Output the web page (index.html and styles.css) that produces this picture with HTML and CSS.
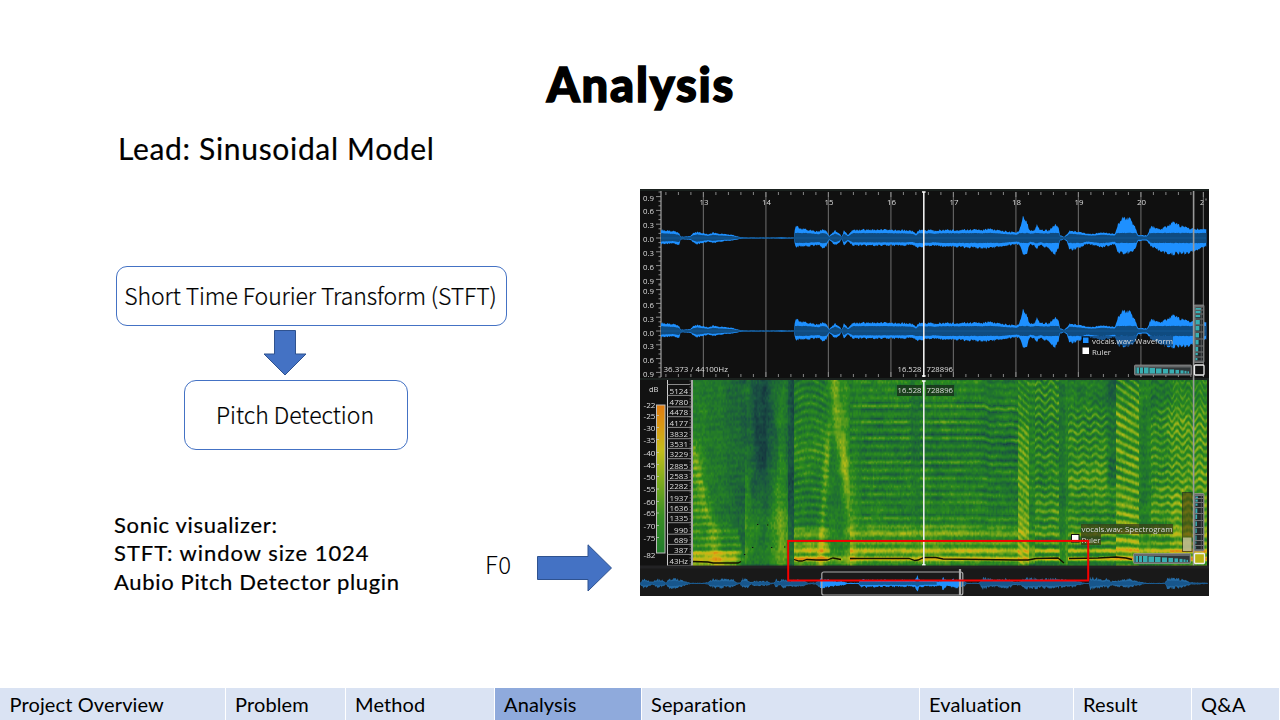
FILE: index.html
```html
<!DOCTYPE html>
<html lang="en">
<head>
<meta charset="utf-8">
<title>Analysis</title>
<link rel="stylesheet" href="styles.css">
</head>
<body>
<main class="slide">
  <h1 class="title"><span>Analysis</span></h1>
  <div class="content">
    <section class="left">
      <h2 class="subtitle">Lead: Sinusoidal Model</h2>
      <div class="flow">
        <div class="step step-wide"><span class="stft">Short Time Fourier Transform (STFT)</span></div>
        <svg class="arrow-down" width="44" height="46" viewBox="0 0 44 46"><path d="M11.500 .5H32.500V24H43L22 45L1 24H11.500Z"/></svg>
        <div class="step step-small"><span class="pitch">Pitch Detection</span></div>
      </div>
      <div class="bottom">
        <div class="notes">
          <p class="n1">Sonic visualizer:</p>
          <p class="n2">STFT: window size 1024</p>
          <p class="n3">Aubio Pitch Detector plugin</p>
        </div>
        <span class="f0">F0</span>
        <svg class="arrow-right" width="76" height="48" viewBox="0 0 76 48"><path d="M.5 12.500H51V.8L74.500 24L51 47V35.500H.5Z"/></svg>
      </div>
    </section>
    <figure class="viewer">
      <canvas id="spectrogram" class="spectrogram" width="514" height="186"></canvas>
      <svg id="overlay" class="overlay" width="569" height="407" viewBox="640 189 569 407"></svg>
    </figure>
  </div>
  <nav class="tabs">
    <span>Project Overview</span><span>Problem</span><span>Method</span><span class="active">Analysis</span><span>Separation</span><span>Evaluation</span><span>Result</span><span>Q&amp;A</span>
  </nav>
</main>
<script src="script.js"></script>
</body>
</html>
```
FILE: styles.css
```css
* { box-sizing: border-box; }
body { margin: 0; background: #fff; color: #000; font-family: Lato, "Open Sans", sans-serif; }
.slide { width: 1280px; height: 720px; display: flex; flex-direction: column; overflow: hidden; }
.title { margin: 0; height: 130px; padding-top: 56px; text-align: center; font-size: 47px; line-height: 56px; font-weight: 900; letter-spacing: 1.8px; text-indent: 2px; -webkit-text-stroke: 1.5px #000; }
.content { flex: 1; display: grid; grid-template-columns: 640px 569px; }
.left { padding-left: 114px; display: flex; flex-direction: column; }
.subtitle { margin: -1px 0 0 4px; height: 137px; font-size: 30px; line-height: 38px; font-weight: 400; letter-spacing: .68px; -webkit-text-stroke: .2px #000; }
.flow { display: flex; flex-direction: column; margin-left: 2px; width: 391px; }
.step { border: 1px solid #4472c4; border-radius: 11px; display: flex; align-items: center; justify-content: center; font: 300 23px "Noto Sans CJK SC", "Open Sans", sans-serif; white-space: nowrap; padding-bottom: 3px; -webkit-text-stroke: .2px #000; }
.stft { letter-spacing: -.1px; margin-right: 2px; }
.step-wide { width: 391px; height: 60px; }
.step-small { width: 224px; height: 70px; margin-left: 68px; border-radius: 12px; padding-right: 2px; }
.arrow-down { margin: 4px 0 4px 147px; }
.arrow-down, .arrow-right { fill: #4472c4; stroke: #2f528f; stroke-width: 1; }
.bottom { display: flex; margin-top: 61px; }
.notes { width: 371px; font-size: 22px; line-height: 28.500px; white-space: nowrap; -webkit-text-stroke: .2px #000; }
.notes p { margin: 0; position: relative; top: -.5px; }
.n1 { letter-spacing: .67px; }
.n2 { letter-spacing: .95px; }
.n3 { letter-spacing: .67px; }
.f0 { width: 52px; padding-top: 35px; font: 300 24px/36px "Noto Sans CJK SC", sans-serif; letter-spacing: .4px; }
.arrow-right { margin-top: 33px; }
.viewer { position: relative; margin: 59px 0 0; width: 569px; height: 407px; background: #171918; overflow: hidden; }
.spectrogram { position: absolute; left: 53px; top: 191px; }
.overlay { position: absolute; left: 0; top: 0; font: 8px "Open Sans", "Noto Sans", sans-serif; }
.tabs { display: grid; grid-template-columns: 226px 120px 149px 147px 278px 154px 118px 88px; height: 32px; }
.tabs span { background: #dae3f3; border-right: 1px solid #fff; padding-left: 9px; font-size: 20px; line-height: 33px; letter-spacing: .13px; white-space: nowrap; }
.tabs span:first-child { padding-left: 9.500px; }
.tabs .active { background: #8faadc; }
```
FILE: script.js
```js
const out = [];
const add = s => out.push(s);
const rect = (x, y, w, h, fill, extra = '') => add(`<rect x="${x}" y="${y}" width="${w}" height="${h}" fill="${fill}" ${extra}/>`);
const line = (x1, y1, x2, y2, c = '#aaa', w = 1) => add(`<line x1="${x1}" y1="${y1}" x2="${x2}" y2="${y2}" stroke="${c}" stroke-width="${w}"/>`);
const label = (x, y, s, w, anchor = 'start') => add(`<text x="${x}" y="${y}" fill="#ddd" text-anchor="${anchor}" ${w ? `textLength="${w}" lengthAdjust="spacingAndGlyphs"` : ''}>${s}</text>`);

function hash(a, b) { const s = Math.sin(a * 127.1 + b * 311.7) * 43758.5453; return s - Math.floor(s); }
function noise(x, y) {
  const i = Math.floor(x), j = Math.floor(y);
  let u = x - i, v = y - j;
  u = u * u * (3 - 2 * u); v = v * v * (3 - 2 * v);
  return (hash(i, j) * (1 - u) + hash(i + 1, j) * u) * (1 - v) + (hash(i, j + 1) * (1 - u) + hash(i + 1, j + 1) * u) * v;
}
const bell = (d, w) => Math.exp(-d * d / (w * w));
const step = (a, b, x) => { const t = Math.max(0, Math.min(1, (x - a) / (b - a))); return t * t * (3 - 2 * t); };
function interp(points, x, k = 1) {
  for (let i = 1; i < points.length; i++) if (x <= points[i][0]) {
    const a = points[i - 1], b = points[i];
    return a[k] + (b[k] - a[k]) * Math.max(0, x - a[0]) / (b[0] - a[0]);
  }
  return points[points.length - 1][k];
}

/* Waveforms: x, upper and lower amplitude */
const wave = [[661,8,6],[673,7,5],[679.5,5,7],[680.5,1.3,1.3],[690,1.7,1.7],[693,4.5,4],[697,6,6.5],[708,3.5,3.5],[713,5.5,5],[720,4.2,3.5],[733,3,2.5],[740,1,1],[744,.4,.4],[777,.4,.4],[781,1,1],[787,.4,.4],[794,.4,.4],[794.4,7,5],[796,12.5,9.5],[799,9.5,8.5],[807,8.5,8],[819,6.2,6.7],[822.5,9.2,9.5],[826.5,7,8.5],[829,2,2],[835,7.5,7],[840,4,4],[841.6,1,1],[844,7.5,7],[848,3,3],[853,8.2,7.3],[880,8.2,7.3],[907,7.7,7.3],[913,7,6.5],[916,4,8.5],[919,8.4,9.4],[924,7.5,8],[930,8,8],[934,7,7],[940,8,8],[983,8,10],[988,9,10.5],[1000,7.3,8.2],[1017,5.5,6],[1019.5,8.5,7],[1023.5,23,18],[1027,15,15],[1030,7,6],[1035,8,8],[1037,14,10],[1040,8,7],[1049,7.5,10],[1055,13,17],[1058.5,11,10],[1060,3,3],[1064,1,1],[1067,4,4],[1069.5,7.5,12],[1078,6,10],[1087,4.5,6],[1093,4,7],[1103,5.5,9],[1115,4,6],[1117.5,13,13],[1123,20,16],[1130,18.5,14],[1135,11,12],[1138,3,3],[1147,2.5,2.5],[1151,12,8],[1160,8.5,13],[1170,13,16],[1173,15.5,16],[1180,12,15],[1187,10,15],[1193,9,13],[1200,9,10],[1206.5,8,8]];
function envelope(pts, cy, color, scale = 1, cap = 99, jag = .25) {
  const top = [], bot = [], x0 = pts[0][0], x1 = pts[pts.length - 1][0];
  for (let x = x0; x <= x1; x += .7) {
    const j = 1 - jag / 2 + jag * hash(Math.floor(x * 1.4), 3), k = 1 - jag / 2 + jag * hash(Math.floor(x * 1.4), 5);
    top.push(`${x.toFixed(1)} ${(cy - Math.min(interp(pts, x, 1) * scale, cap) * j).toFixed(2)}`);
    bot.unshift(`${x.toFixed(1)} ${(cy + Math.min(interp(pts, x, 2) * scale, cap) * k).toFixed(2)}`);
  }
  add(`<path fill="${color}" d="M${top.join('L')}L${bot.join('L')}Z"/>`);
}
rect(640, 189, 569, 190, '#101010');
rect(640, 189, 569, 2, '#1a211e');
rect(640, 378, 569, 2, '#1a211e');
line(661, 191, 661, 377, '#bbb');
for (let i = 0; i < 9; i++) line(703.4 + i * 62.5, 192, 703.4 + i * 62.5, 377, '#606060', 1.2);
for (let i = -3; i < 41; i++) {
  const x = 703.4 + i * 12.5, h = i % 5 ? 3 : 5;
  line(x, 192, x, 192 + h, '#888'); line(x, 377 - h, x, 377, '#888');
}
['13','14','15','16','17','18','19','20'].forEach((t, i) => label(704 + i * 62.5, 204.500, t, 9, 'middle'));
label(1200, 204.500, '2', 4);
line(1206, 198.500, 1206, 200.500, '#999');
[238, 331].forEach(cy => {
  envelope(wave, cy, '#1e90ff');
  envelope(wave, cy, '#0f4b80', .6, 5, .1);
  line(661, cy, 1206, cy, '#17629d', .6);
  for (let j = -10; j <= 10; j++) line(j % 3 ? 658.500 : 656, cy + j * 4.600, 661, cy + j * 4.600, '#aaa', .8);
});
['0.9','0.6','0.3','0.0','0.3','0.6','0.9'].forEach((t, i) => {
  label(643, 200.500 + i * 13.9, t, 11);
  label(643, 293.8 + i * 13.900, t, 11);
});
label(663.5, 372, '36.373 / 44100Hz', 64.500);

/* Spectrogram axes */
rect(640, 380, 53, 186, '#121212');
label(649, 392, 'dB', 9.500);
add('<defs><linearGradient id="level" x1="0" y1="0" x2="0" y2="1"><stop offset="0" stop-color="#e17c10"/><stop offset=".15" stop-color="#d89a14"/><stop offset=".31" stop-color="#c3bd1b"/><stop offset=".5" stop-color="#83ad1e"/><stop offset=".75" stop-color="#398e24"/><stop offset="1" stop-color="#207b2c"/></linearGradient></defs>');
rect(656.5, 405, 8.500, 148, 'url(#level)', 'stroke="#bbb" stroke-width="1"');
[[22,405],[25,415.5],[30,427.5],[35,439.5],[40,452.5],[45,464.5],[50,476.500],[55,489],[60,501.500],[65,513],[70,525.5],[75,537.500],[82,555]].forEach(([n, y]) => {
  label(643.5, y + 3, '-' + n, 12);
  if (n !== 22 && n !== 82) line(656, y, 659, y, '#ccc', .7);
});
line(667.5, 380, 667.5, 566, '#ccc');
line(667, 384.5, 690, 384.5, '#aaa', .8);
[['5124',390.7],['4780',402.200],['4478',412],['4177',422.700],['3832',434],['3531',443.700],['3229',454],['2885',465.500],['2583',475.700],['2282',486],['1937',497.700],['1636',507.700],['1335',518],['990',529.500],['689',539.700],['387',549.700],['43Hz',561]].forEach(([t, y]) => {
  label(688, y + 3, t, t.length === 3 ? 14 : 18.500, 'end');
  line(667, y + 4.700, 692, y + 4.700, '#aaa', .8);
});
line(692, 380, 692, 566, '#bbb', 1.8);
for (let y = 381; y < 566; y += 3) line(689.500, y, 691.500, y, '#888', .7);

/* Detected pitch contour */
const dark = d => add(`<path d="${d}" fill="none" stroke="#141000" stroke-width="1.3"/>`);
dark('M693 561.500L708 562L713 563H738L741 561.500');
dark('M794 559.500L799 561L802 561L807 559.500L816 560L827 560L833 558L841 559.500');
dark('M850 558.500H909L915 560.500L918 560L924 557.500L936 557.500L943 559L1015 560L1028 560L1036 558.500L1058 558L1064 563');
dark('M1069 558.500L1098 558L1116 557L1126 558L1132 559.500');
[[757,524],[767,524.500],[752,547],[771,547],[784,546.500],[744,554]].forEach(p => rect(p[0], p[1], 1.3, 1, '#111'));

/* Legends, playhead and position labels */
line(1193.600, 191, 1193.600, 566, '#999', 1.6);
rect(1081, 336, 92, 10, '#101010', 'opacity=".45"');
rect(1082.500, 337, 6.500, 6.500, '#1e90ff', 'stroke="#060d16"');
rect(1082.500, 347.500, 6.500, 6.500, '#fff');
label(1092, 344, 'vocals.wav: Waveform', 81);
label(1092, 354.500, 'Ruler', 19);
rect(897, 385, 25, 11, '#172b18', 'opacity=".75"');
rect(926, 385, 28, 11, '#172b18', 'opacity=".75"');
[372, 393].forEach(y => { label(897.500, y, '16.528', 24); label(926.500, y, '728896', 26.500); });
line(923.800, 192, 923.800, 377, '#eee', 1.6);
line(923.800, 381, 923.800, 565, '#eee', 1.6);
[192, 376, 381, 565].forEach(y => line(922, y, 925.600, y, '#fff', 1.5));
rect(1081, 524, 92, 10, '#383c18', 'opacity=".75"');
rect(1081, 534, 20, 11, '#383c18', 'opacity=".75"');
label(1081.500, 532, 'vocals.wav: Spectrogram', 91);
label(1081.500, 542.500, 'Ruler', 19);
rect(1071.500, 534.500, 7.500, 7.500, '#fff', 'stroke="#111"');

/* Zoom wheels */
function horizontalWheel(x, y, w) {
  rect(x, y, w, 10, '#66696a', 'rx="1" stroke="#999" stroke-width=".7"');
  rect(x + 1, y + 2.500, w - 2, 6, '#303638');
  [[1,1],[2.500,2],[5.500,3],[9.500,4.500],[15,5.500],[21.500,5.500],[28.500,5],[35,4.500],[41,3.500],[46,3],[50,2],[53,1.500]].forEach(([dx, bw], i) => {
    const h = 6 - Math.max(0, i - 3) * .48;
    rect(x + dx, y + 8.500 - h, bw, h, '#39aeb2');
  });
}
function verticalWheel(x, y, h, bright) {
  rect(x, y, 10, h, '#66696a', 'rx="1" stroke="#999" stroke-width=".7"');
  rect(x + 1.500, y + 2, 7.500, h - 4, '#24282a');
  [3,6,10,15,21,28,35,42,48,53].forEach((dy, i) => {
    rect(x + 1.500, y + dy, bright ? 5.500 - i * .4 : 2.4 - i * .2, i > 2 && i < 8 ? 4.500 : 2.200, '#39aeb2');
    line(x + 1, y + dy - 1, x + 9, y + dy - 1, '#777', 1);
  });
  line(x + 7.300, y + 2, x + 7.300, y + h - 2, '#66696a', .7);
}
horizontalWheel(1134.500, 365, 57);
verticalWheel(1194, 305, 57.500, true);
horizontalWheel(1133.500, 553.500, 57);
rect(1182.500, 492.500, 9.500, 59, '#514711', 'opacity=".65" stroke="#222"');
rect(1183, 537.500, 8.500, 13.500, '#ccc9a0', 'opacity=".8"');
verticalWheel(1194, 493.500, 57.500, false);
rect(1194.500, 365, 9.500, 10, '#111', 'rx="1" stroke="#eee" stroke-width="1.3"');
rect(1194.500, 553.500, 10, 10, '#b9b414', 'rx="1" stroke="#eee" stroke-width="1.3"');

/* Overview strip */
rect(640, 567, 569, 29, '#191919');
rect(640, 565.500, 569, 3, '#222224');
const overview = [[640,.5],[643,4],[646,4],[649,2],[653,1.500],[656,4],[663,3],[666,.7],[669,4.500],[675,4.500],[682,3],[690,.5],[704,.5],[708,1],[711,4],[720,4],[734,3.500],[737,1],[740,.7],[743,4.500],[748,3.500],[751,1],[755,2.500],[768,2],[771,.6],[774,.6],[776,4],[780,2],[783,4.500],[790,2],[794,3.500],[804,2.500],[808,.7],[816,1],[820,4],[830,3.500],[836,2],[842,2],[847,.5],[859,.5],[860,3.500],[880,3],[915,3],[917,7],[920,3],[937,2.500],[941,2],[943,6],[947,2],[953,4],[962,4],[967,.5],[979,.5],[983,5.500],[995,3],[1008,4.500],[1014,1.500],[1020,2],[1025,5.500],[1042,4],[1054,4.500],[1074,3],[1084,.5],[1089,.5],[1090,6],[1099,4],[1104,3],[1107,5],[1111,2],[1128,4],[1146,.5],[1165,.5],[1167,5],[1181,4],[1191,1],[1208,.5]].map(([x, a]) => [x, a, a]);
envelope(overview, 583.400, '#246ba5', 1, 99, .7);
envelope(overview, 583.400, '#17568c', .55, 99, .3);
envelope(overview.filter(p => p[0] >= 820 && p[0] <= 962), 583.400, '#1e90ff', 1, 99, .6);
envelope(overview.filter(p => p[0] >= 859 && p[0] <= 940), 583.400, '#135d9c', .5, 99, .1);
rect(821.800, 572, 141, 23, 'none', 'rx="2" stroke="#aaa" stroke-width="1.2"');
line(960, 569, 960, 595, '#aaa', 2.200);
rect(788.200, 540.900, 300, 39.600, 'none', 'stroke="#f60000" stroke-width="2"');
document.getElementById('overlay').innerHTML = out.join('');

/* Spectrogram */
const palette = [[0,20,48,62],[.2,26,82,66],[.36,31,112,48],[.5,42,137,31],[.65,105,162,28],[.8,177,185,24],[.92,212,178,20],[1.05,226,137,18]];
function colour(v) {
  return [1, 2, 3].map(k => interp(palette, Math.max(0, Math.min(1.05, v)), k));
}
function level(x, y) {
  const low = Math.max(0, (y - 500) / 66);
  const grain = (noise(x / 1.5, y / 2.6) - .5) * .14 + (noise(x / 8, y / 10) - .5) * .1;
  let base = .4, ridge = .1, space = 8, phase = 0;
  if (x < 745) {
    const edge = interp([[693,440],[700,470],[706,505],[712,525],[737,530],[743,556]], x);
    const inside = step(edge - 9, edge + 6, y);
    base = .43 - Math.max(0, x - 702) * .0032 + .08 * inside + Math.max(0, x - 710) * .0032 * inside;
    base += .15 * bell(x - interp([[400,690],[455,694],[500,704],[527,713],[566,717]], y), 6) * step(430, 455, y);
    ridge = .02 + .06 * inside;
    space = 7 + (x - 693) * .005;
    base += .3 * step(549, 553, y) * (1 - step(733, 743, x));
  } else if (x < 794) {
    base = .2 + .2 * step(430, 530, y) + .2 * bell(x - 780, 8) + .12 * bell(x - 745, 6) - .08 * bell(x - 762, 7) * (1 - low);
    if (x > 787) base = .19 + .12 * low;
    base += (noise(x / 4, y / 35) - .5) * .12;
    ridge = .015;
  } else if (x < 850) {
    const d = step(823, 832, x);
    base = .4 + .07 * bell(y - 450, 27) * (1 - d);
    ridge = .065 * (1 - d) + .015;
    space = 7.500 + .27 * Math.sin((Math.min(x, 828) - 794) / 30 * Math.PI);
    base += .1 * step(523, 532, y) * (1 - d * .7);
    base += .2 * bell(x - interp([[380,832],[430,828],[480,825],[520,822],[566,820]], y), 3) * step(400, 460, y);
    base += .25 * bell(x - interp([[380,834],[430,838],[480,846],[530,850],[566,851]], y), 5) * (1 - low * .6);
    base += .13 * bell(x - 845, 4) * (1 - step(460, 500, y));
    base += .12 * step(552, 557, y);
  } else if (x < 1018) {
    base = .43 + .05 * low - .04 * bell(y - 448, 18) - .03 * step(979, 985, x);
    space = 8.020;
    if (x > 982) space *= 1 - .018 * step(982, 990, x) + .003 * Math.sin((x - 982) * .5);
    else if (x > 908 && x < 922) space *= 1 + .006 * Math.sin((x - 908) * .55);
    const nf = (566 - y) / space, n = Math.round(nf);
    ridge = .045 + .06 * hash(n, 4);
    if (n === 20 || n === 18 || n === 13 || n === 16) ridge += .07;
    base += .08 * step(518, 530, y);
    base += .14 * bell(x - 850, 6) * step(430, 500, y);
    if (x < 862) ridge *= .6;
    if (x > 910 && x < 920) { ridge *= .5; base -= .03; }
  } else if (x < 1029) {
    base = .6 - .12 * (1 - step(405, 450, y)); ridge = .09;
    phase = (x - 1018) * .13; space = 7.400;
    base += .05 * step(485, 510, y);
  } else if (x < 1035) {
    base = .45; ridge = .06; space = 7.400; phase = 1.400;
  } else if (x < 1059) {
    base = .46 + .08 * bell(y - 512, 15) - .03 * bell(x - 1041, 3); ridge = .13;
    space = 7.900 + .13 * Math.sin((x - 1035) / 2);
  } else if (x < 1068) {
    base = .36 + .13 * low + .09 * bell(x - 1066, 1.500); ridge = .02;
  } else if (x < 1116) {
    const late = step(1104, 1110, x) * (1 - step(470, 510, y));
    const top = 1 - step(395, 415, y);
    base = .47 + .1 * bell(y - 475, 20) * (1 - late) - .12 * late - .07 * top; ridge = .12 * (1 - late * .6) * (1 - top * .7);
    space = 7.900 + .11 * Math.sin((x - 1068) / 1.900);
  } else if (x < 1139) {
    base = .57 - .09 * (1 - step(385, 415, y)) + .04 * step(490, 510, y); ridge = .16;
    space = 9 - (x - 1116) * .035;
  } else if (x < 1151) {
    base = .4 + .12 * low + .04 * Math.abs(x - 1144) / 6; ridge = .035; space = 7.700;
  } else {
    const far = step(1164, 1174, x), top = 1 - step(395, 425, y);
    base = .48 + .08 * far - .1 * top + .06 * step(465, 500, y);
    ridge = .12 * (1 - top * .5);
    space = 7.800 + (.1 + .07 * far) * Math.sin((x - 1151) / (2.100 - .3 * far));
  }
  const h = (566 - y) / space + phase;
  const strength = .65 + .7 * noise(x / 12, y / 12);
  let v = base + Math.cos(h * Math.PI * 2) * ridge * strength + grain;
  if (x >= 794 && y > 520 && !(x > 1059 && x < 1068)) {
    const g = x > 829 && x < 850 ? .4 : 1;
    v += g * (.32 * bell(y - 558.500, 2.500) + .24 * bell(y - 550.500, 2.800) + .06 * bell(y - 543, 2) + .15 * bell(y - 532, 3));
    if (x < 829) v += .16 * bell(y - 547, 3);
  }
  if (y > 563) v -= .1;
  return v;
}
const canvas = document.getElementById('spectrogram');
const context = canvas.getContext('2d');
const image = context.createImageData(514, 186);
for (let y = 0; y < 186; y++) for (let x = 0; x < 514; x++) {
  const c = colour(level(693 + x, 380 + y)), p = (y * 514 + x) * 4;
  image.data[p] = c[0]; image.data[p + 1] = c[1]; image.data[p + 2] = c[2]; image.data[p + 3] = 255;
}
context.putImageData(image, 0, 0);
```
